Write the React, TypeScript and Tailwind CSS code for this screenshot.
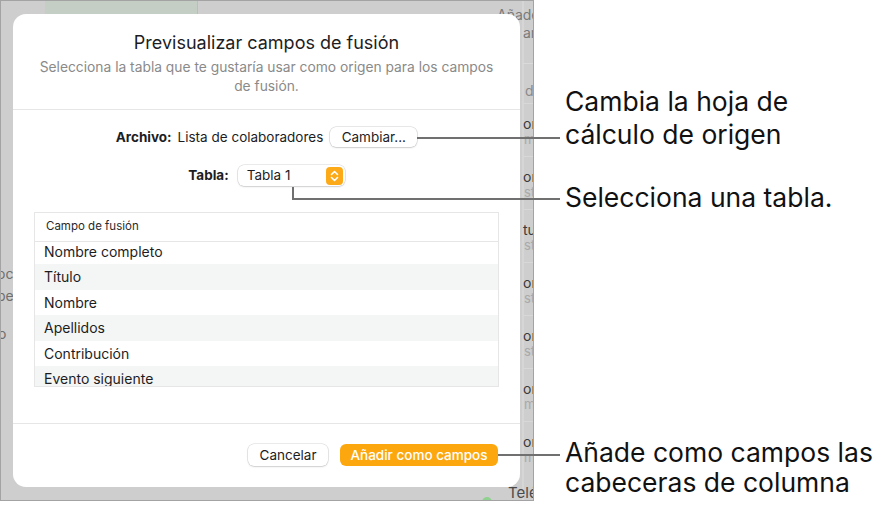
import React from "react";

const rows = [
  "Nombre completo",
  "Título",
  "Nombre",
  "Apellidos",
  "Contribución",
  "Evento siguiente",
  "Correo electrónico",
];

const sideRows = [
  { a: "om", b: "mi" },
  { a: "om", b: "st" },
  { a: "tu", b: "st" },
  { a: "om", b: "st" },
  { a: "om", b: "st" },
  { a: "om", b: "mi" },
  { a: "or", b: "mi" },
];

export default function App() {
  return (
    <div
      className="relative w-[896px] h-[513px] bg-white overflow-hidden flex items-start"
      style={{ fontFamily: "Inter, 'Noto Sans', sans-serif" }}
    >
      {/* Screenshot backdrop */}
      <div className="relative shrink-0 w-[534px] h-[501px] bg-[#cecece] border border-[#a3a3a3] overflow-hidden">
        {/* background fragments (canvas behind dialog) */}
        <div className="absolute left-[44px] top-0 w-[153px] h-[14px] bg-[#c4cec4] border-r border-[#9bd59b]" />
        <div className="absolute left-[521px] top-0 w-[2px] h-[501px] bg-[#d6d6d6]" />
        <div className="absolute left-0 top-[264px] text-[14px] leading-[18px] text-[#6f6f6f]">
          <div className="-ml-[4px]">oc</div>
          <div className="-ml-[4px] mt-[4px]">be</div>
          <div className="-ml-[3px] mt-[20px]">o</div>
        </div>
        <div className="absolute left-[496px] top-[5px] text-[14px] leading-[18px] text-[#7a7a7a]">Añade</div>
        <div className="absolute left-[522px] top-[23px] flex flex-col text-[14px] leading-[18px]">
          <span className="text-[#7a7a7a]">ara</span>
          <div className="w-[12px] h-[1px] bg-[#dadada] mt-[21px]" />
          <span className="ml-[2px] mt-[18px] text-[#8a8a8a]">d</span>
          <div className="mt-[3px] flex flex-col">
            {sideRows.map((r, i) => (
              <div key={i} className="h-[53px] flex flex-col pt-[12px]">
                <div className="w-[12px] h-[1px] bg-[#d8d8d8] -mt-[12px] mb-[11px]" />
                <div className="text-[14px] leading-[17px] text-[#3a3a3a]">{r.a}</div>
                <div className="text-[13px] leading-[15px] text-[#a9a9a9] ml-[1px]">{r.b}</div>
              </div>
            ))}
          </div>
        </div>
        <div className="absolute left-[507px] top-[483px] text-[15px] leading-[18px] text-[#4a4a4a]">Telé</div>
        <div className="absolute left-[481px] top-[496px] w-[10px] h-[10px] rounded-full bg-[#8fd18f]" />

        {/* Dialog */}
        <div className="relative ml-[12px] mt-[13px] w-[507px] h-[473px] bg-white rounded-[13px] flex flex-col">
          <div className="pt-[18px] pb-[13px] border-b border-[#e6e6e6] text-center">
            <div className="text-[18px] leading-[22px] text-[#1d1d1f]">Previsualizar campos de fusión</div>
            <div className="mt-[4px] text-[13.8px] leading-[19px] text-[#8a8a8a]">
              Selecciona la tabla que te gustaría usar como origen para los campos
              <br />
              de fusión.
            </div>
          </div>

          <div className="flex-1 flex flex-col px-[21px]">
            <div className="mt-[17px] h-[20px] flex items-center justify-center text-[13.5px] text-[#1d1d1f]">
              <span className="font-bold">Archivo:</span>
              <span className="ml-[6px]">Lista de colaboradores</span>
              <button className="ml-[7px] h-[20px] w-[87px] rounded-[6px] bg-white text-[13.5px] text-[#1d1d1f] shadow-[0_0_0_0.5px_rgba(0,0,0,0.18),0_1px_2px_rgba(0,0,0,0.12)]">
                Cambiar...
              </button>
            </div>

            <div className="mt-[18px] h-[21px] flex items-center justify-center text-[13.5px] text-[#1d1d1f]">
              <span className="font-bold">Tabla:</span>
              <div className="ml-[9px] h-[21px] w-[107px] rounded-[6px] bg-white flex items-center justify-between pl-[9px] pr-[2px] shadow-[0_0_0_0.5px_rgba(0,0,0,0.16),0_1px_2px_rgba(0,0,0,0.12)]">
                <span>Tabla 1</span>
                <span className="w-[17px] h-[18px] rounded-[4px] bg-[#fdaa18] flex items-center justify-center">
                  <svg width="9" height="12" viewBox="0 0 9 12" fill="none">
                    <path d="M1.5 4.5 L4.5 1.5 L7.5 4.5" stroke="white" strokeWidth="1.6" strokeLinecap="round" strokeLinejoin="round" />
                    <path d="M1.5 7.5 L4.5 10.5 L7.5 7.5" stroke="white" strokeWidth="1.6" strokeLinecap="round" strokeLinejoin="round" />
                  </svg>
                </span>
              </div>
            </div>

            <div className="mt-[26px] h-[175px] border border-[#e6e6e6] flex flex-col">
              <div className="h-[29px] shrink-0 border-b border-[#e6e6e6] flex items-center pl-[11px] text-[11.5px] text-[#2a2a2a]">
                Campo de fusión
              </div>
              <div className="flex-1 overflow-hidden">
                <div className="-mt-[3.5px]">
                  {rows.map((r, i) => (
                    <div
                      key={r}
                      className={`h-[25.5px] flex items-center pl-[9px] text-[14px] text-[#1d1d1f] ${i % 2 === 1 ? "bg-[#f4f5f5]" : "bg-white"}`}
                    >
                      {r}
                    </div>
                  ))}
                </div>
              </div>
            </div>
          </div>

          <div className="border-t border-[#e6e6e6] pt-[20px] pb-[21px] px-[22px] flex justify-end items-center">
            <button className="h-[22px] w-[80px] rounded-[6px] bg-white text-[13.5px] text-[#1d1d1f] shadow-[0_0_0_0.5px_rgba(0,0,0,0.16),0_1px_2px_rgba(0,0,0,0.12)]">
              Cancelar
            </button>
            <button className="ml-[12px] h-[22px] w-[158px] rounded-[6px] bg-[#fda70f] text-[13.5px] font-medium text-white">
              Añadir como campos
            </button>
          </div>
        </div>
      </div>

      {/* Callout texts */}
      <div className="flex flex-col pl-[31px] pt-[85px] text-[26.5px] text-[#111] whitespace-nowrap">
        <div className="leading-[33px]">
          Cambia la hoja de
          <br />
          cálculo de origen
        </div>
        <div className="mt-[30px] leading-[33px]">Selecciona una tabla.</div>
        <div className="mt-[223px] leading-[30px]">
          Añade como campos las
          <br />
          cabeceras de columna
        </div>
      </div>

      {/* Callout lines (overlay) */}
      <div className="absolute left-[417px] top-[137px] w-[143px] h-[2px] bg-[#707070]" />
      <div className="absolute left-[292px] top-[187px] w-[2px] h-[13px] bg-[#707070]" />
      <div className="absolute left-[292px] top-[198px] w-[268px] h-[2px] bg-[#707070]" />
      <div className="absolute left-[498px] top-[454px] w-[62px] h-[2px] bg-[#707070]" />
    </div>
  );
}
